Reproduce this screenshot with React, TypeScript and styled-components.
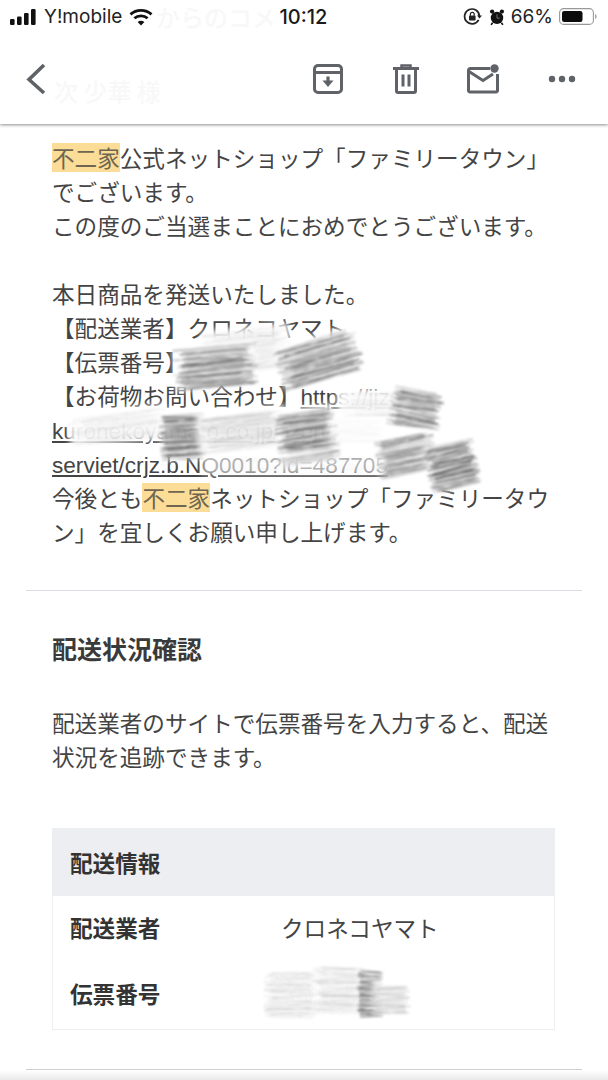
import styled, { createGlobalStyle } from 'styled-components';

const GlobalStyle = createGlobalStyle`
	html, body {
		margin: 0;
		padding: 0;
		background: #ffffff;
	}

	body {
		font-family: 'Noto Sans CJK JP', 'Noto Sans', sans-serif;
		color: #444444;
	}
`;

const Page = styled.div`
	position: relative;
	width: 608px;
	height: 1080px;
	overflow: hidden;
	background: #ffffff;
`;

const TopBar = styled.header`
	position: relative;
	height: 124px;
	background: #ffffff;
	box-shadow: 0 1px 3px rgba(0, 0, 0, 0.45);
	z-index: 2;
`;

const GhostText = styled.span<{ $left: number; $top: number }>`
	position: absolute;
	left: ${(props) => props.$left}px;
	top: ${(props) => props.$top}px;
	font-size: 24px;
	line-height: 30px;
	font-weight: 500;
	color: #f8f8f8;
	white-space: nowrap;
`;

const StatusBar = styled.div`
	position: relative;
	display: grid;
	grid-template-columns: 1fr auto 1fr;
	align-items: center;
	height: 33px;
	padding: 0 11px 0 10px;
	font-family: Inter, 'Liberation Sans', sans-serif;
	font-size: 19px;
	color: #222222;
`;

const StatusLeft = styled.div`
	display: flex;
	align-items: center;
	gap: 7px;
`;

const StatusRight = styled.div`
	display: flex;
	align-items: center;
	justify-content: flex-end;
	gap: 6px;
`;

const Time = styled.span`
	font-size: 20px;
	font-weight: 500;
	color: #1a1a1a;
`;

const ActionBar = styled.nav`
	position: relative;
	display: flex;
	align-items: center;
	justify-content: space-between;
	height: 91px;
	padding: 0 32px 0 26px;
`;

const Actions = styled.div`
	display: flex;
	align-items: center;
	gap: 48px;
`;

const Content = styled.main`
	padding: 17px 0 0;
`;

const Section = styled.section`
	padding: 0 52px;
`;

const Paragraph = styled.p`
	margin: 0;
	font-size: 22.6px;
	line-height: 34px;
	white-space: nowrap;
`;

const Mark = styled.span`
	display: inline-block;
	line-height: 29px;
	background: #fcdd98;
	color: #6e6650;
`;

const LinkText = styled.span`
	font-family: 'Liberation Sans', sans-serif;
	line-height: 1;
	color: #444444;
	text-decoration: underline;
	text-underline-offset: 2px;
`;

const Divider = styled.hr`
	height: 1px;
	margin: 41px 26px 0;
	border: 0;
	background: #d9dce6;
`;

const Heading = styled.h2`
	margin: 39px 0 40px;
	font-size: 25px;
	line-height: 36px;
	font-weight: 700;
	color: #3a3a3a;
`;

const InfoTable = styled.div`
	width: 503px;
	margin-top: 54px;
	padding-bottom: 1px;
	border: 1px solid #eceef2;
	box-sizing: border-box;
`;

const TableHead = styled.div`
	display: flex;
	align-items: center;
	height: 67px;
	padding: 0 17px;
	background: #eceef2;
	font-size: 22.6px;
	font-weight: 700;
	color: #333333;
`;

const TableRow = styled.div`
	display: grid;
	grid-template-columns: 211px 1fr;
	align-items: center;
	box-sizing: border-box;
	height: 66px;
	padding: 0 17px 3px;
	font-size: 22.6px;
`;

const RowLabel = styled.span`
	font-weight: 700;
	color: #333333;
`;

const RowValue = styled.span`
	color: #444444;
`;

const FootRule = styled.div`
	height: 1px;
	margin: 39px 26px 0;
	background: #cfcfcf;
`;

const FootShade = styled.div`
	height: 9px;
	margin-top: 1px;
	background: linear-gradient(#fdfdfd, #e9e9e9);
`;

const ScribbleLayer = styled.svg`
	position: absolute;
	top: 0;
	left: 0;
	z-index: 1;
	pointer-events: none;
`;

type Patch = {
	x: number;
	y: number;
	w: number;
	h: number;
	angle: number;
	ink: number;
};

const patches: Patch[] = [
	{ x: 206, y: 330, w: 82, h: 40, angle: -6, ink: 0.1 },
	{ x: 177, y: 347, w: 76, h: 38, angle: -5, ink: 0.55 },
	{ x: 280, y: 338, w: 78, h: 40, angle: -16, ink: 0.5 },
	{ x: 340, y: 392, w: 96, h: 24, angle: 0, ink: 0.06 },
	{ x: 394, y: 390, w: 44, h: 36, angle: 10, ink: 0.5 },
	{ x: 72, y: 412, w: 92, h: 28, angle: -6, ink: 0.07 },
	{ x: 164, y: 414, w: 38, h: 42, angle: -4, ink: 0.7 },
	{ x: 200, y: 412, w: 84, h: 36, angle: -6, ink: 0.16 },
	{ x: 280, y: 410, w: 54, h: 50, angle: -8, ink: 0.6 },
	{ x: 330, y: 418, w: 48, h: 24, angle: 0, ink: 0.03 },
	{ x: 205, y: 456, w: 175, h: 16, angle: 0, ink: 0.03 },
	{ x: 380, y: 436, w: 52, h: 36, angle: -12, ink: 0.5 },
	{ x: 430, y: 442, w: 44, h: 44, angle: -14, ink: 0.68 },
	{ x: 268, y: 970, w: 46, h: 46, angle: 0, ink: 0.12 },
	{ x: 318, y: 966, w: 42, h: 44, angle: 0, ink: 0.14 },
	{ x: 362, y: 970, w: 16, h: 44, angle: 0, ink: 0.65 },
	{ x: 376, y: 984, w: 30, h: 28, angle: 0, ink: 0.2 }
];

// small seeded generator so the hatching is the same on every render
const seeded = (start: number) => {
	let value = start;
	return () => {
		value = (value * 16807) % 2147483647;
		return value / 2147483647;
	};
};

const Hatch = ({ patch, seed }: { patch: Patch; seed: number }) => {
	const random = seeded(seed * 7919 + 13);
	const lines = [];
	for (let y = 0; y < patch.h; y += 0.8) {
		const inset = random() * patch.w * 0.22;
		const start = patch.x + inset - 5;
		const end = patch.x + patch.w - random() * patch.w * 0.22 + 5;
		const top = patch.y + y;
		lines.push(
			<line
				key={y}
				x1={start}
				y1={top + random() * 4}
				x2={end}
				y2={top + random() * 4}
				stroke="#444444"
				strokeWidth={0.8 + random() * 0.9}
				strokeOpacity={Math.min(1, patch.ink * (0.3 + random() * 0.6))}
			/>
		);
	}
	const cx = patch.x + patch.w / 2;
	const cy = patch.y + patch.h / 2;
	return (
		<g transform={`rotate(${patch.angle} ${cx} ${cy})`}>
			<rect
				x={patch.x - 3}
				y={patch.y - 3}
				width={patch.w + 6}
				height={patch.h + 6}
				fill="#ffffff"
				fillOpacity={patch.ink < 0.05 ? 0.6 : 0.94}
				filter="url(#soft)"
			/>
			<g filter="url(#pencil)">{lines}</g>
		</g>
	);
};

const Scribbles = () => (
	<ScribbleLayer width={608} height={1080} viewBox="0 0 608 1080">
		<defs>
			<filter id="soft" x="-20%" y="-20%" width="140%" height="140%">
				<feGaussianBlur stdDeviation="3" />
			</filter>
			<filter id="pencil" x="-10%" y="-10%" width="120%" height="120%">
				<feTurbulence type="fractalNoise" baseFrequency="0.08 1.3" numOctaves="2" seed="4" result="grain" />
				<feColorMatrix
					in="grain"
					type="matrix"
					values="0 0 0 0 0  0 0 0 0 0  0 0 0 0 0  2.4 0 0 0 -0.15"
					result="mask"
				/>
				<feComposite in="SourceGraphic" in2="mask" operator="in" />
				<feGaussianBlur stdDeviation="0.9" />
			</filter>
		</defs>
		{patches.map((patch, index) => (
			<Hatch key={index} patch={patch} seed={index + 1} />
		))}
	</ScribbleLayer>
);

const SignalIcon = () => (
	<svg width="27" height="16" viewBox="0 0 27 16" fill="#111111">
		<rect x="0" y="10" width="4.6" height="6" rx="1.2" />
		<rect x="7" y="7.5" width="4.6" height="8.5" rx="1.2" />
		<rect x="14" y="4" width="4.6" height="12" rx="1.2" />
		<rect x="21" y="0" width="4.6" height="16" rx="1.2" />
	</svg>
);

const WifiIcon = () => (
	<svg width="24" height="18" viewBox="0 0 24 18" fill="none" stroke="#111111" strokeWidth="2.8">
		<path d="M1.5 6.4C7.4 1 16.6 1 22.5 6.4" />
		<path d="M5.4 10.3c3.7-3.3 9.5-3.3 13.2 0" />
		<path d="M12 17.5l-3.4-3.6c2-1.7 4.8-1.7 6.8 0z" fill="#111111" stroke="none" />
	</svg>
);

const RotationLockIcon = () => (
	<svg width="20" height="18" viewBox="0 0 20 18" fill="none" stroke="#222222" strokeWidth="1.7">
		<path d="M15.6 11.8A7.4 7.4 0 1 1 16.4 8.4" />
		<path d="M14 7.4h5l-2.5 3z" fill="#222222" stroke="none" />
		<rect x="6" y="7.6" width="6.6" height="5" rx="0.8" fill="#222222" stroke="none" />
		<path d="M7.4 7.8V6.2a1.9 1.9 0 0 1 3.8 0v1.6" strokeWidth="1.2" />
	</svg>
);

const AlarmIcon = () => (
	<svg width="16" height="18" viewBox="0 0 18 19" fill="#111111">
		<circle cx="9" cy="10.5" r="7" />
		<circle cx="3.5" cy="3.4" r="2.4" />
		<circle cx="14.5" cy="3.4" r="2.4" />
		<path d="M4 16l-1.6 2.4M14 16l1.6 2.4" stroke="#111111" strokeWidth="1.8" />
		<path d="M9 6.4v4.4h3" stroke="#777777" strokeWidth="1.1" fill="none" />
	</svg>
);

const BatteryIcon = () => (
	<svg width="38" height="17" viewBox="0 0 38 17">
		<rect x="0.6" y="0.6" width="33.8" height="15.8" rx="4" fill="none" stroke="#999999" strokeWidth="1.1" />
		<rect x="3" y="3" width="20.5" height="11" rx="2.2" fill="#0c0c0c" />
		<path d="M36 6v5c1.1-.3 1.7-1.3 1.7-2.5S37.1 6.3 36 6z" fill="#aaaaaa" />
	</svg>
);

const BackIcon = () => (
	<svg width="20" height="32" viewBox="0 0 20 32" fill="none" stroke="#5f6368" strokeWidth="3.6">
		<path d="M18 2 3 16.5 18 30" />
	</svg>
);

const ArchiveIcon = () => (
	<svg width="32" height="30" viewBox="0 0 32 30" fill="none" stroke="#5f6368" strokeWidth="3">
		<rect x="1.5" y="1.5" width="27" height="27" rx="3.5" />
		<path d="M1.5 8.5h27" />
		<path d="M15 12.5v6" strokeWidth="3.2" />
		<path d="M9.5 16.5h11L15 23z" fill="#5f6368" stroke="none" />
	</svg>
);

const TrashIcon = () => (
	<svg width="26" height="30" viewBox="0 0 26 30" fill="none" stroke="#5f6368" strokeWidth="3">
		<path d="M0 4.5h26" />
		<path d="M8.5 4V1.5h9V4" strokeWidth="2.5" />
		<path d="M3.5 5v22a1.5 1.5 0 0 0 1.5 1.5h16a1.5 1.5 0 0 0 1.5-1.5V5" />
		<path d="M10 10.5v12M16 10.5v12" />
	</svg>
);

const MailIcon = () => (
	<svg width="33" height="30" viewBox="0 0 33 30" fill="none" stroke="#5f6368" strokeWidth="3">
		<path d="M23 4.5H3.5a2 2 0 0 0-2 2v20a1.5 1.5 0 0 0 1.5 1.5h26a1.5 1.5 0 0 0 1.5-1.5V10" />
		<path d="M2 7.5l14 9 10-6.5" />
		<circle cx="27.5" cy="4.5" r="4.2" fill="#5f6368" stroke="none" />
	</svg>
);

const MoreIcon = () => (
	<svg width="28" height="8" viewBox="0 0 28 8" fill="#5f6368">
		<circle cx="4" cy="4" r="3.2" />
		<circle cx="14" cy="4" r="3.2" />
		<circle cx="24" cy="4" r="3.2" />
	</svg>
);

const App = () => {
	return (
		<Page>
			<GlobalStyle />
			<TopBar>
				<GhostText $left={156} $top={2}>
					からのコメ
				</GhostText>
				<GhostText $left={54} $top={76}>
					次 少華 様
				</GhostText>
				<StatusBar>
					<StatusLeft>
						<SignalIcon />
						<span>Y!mobile</span>
						<WifiIcon />
					</StatusLeft>
					<Time>10:12</Time>
					<StatusRight>
						<RotationLockIcon />
						<AlarmIcon />
						<span>66%</span>
						<BatteryIcon />
					</StatusRight>
				</StatusBar>
				<ActionBar>
					<BackIcon />
					<Actions>
						<ArchiveIcon />
						<TrashIcon />
						<MailIcon />
						<MoreIcon />
					</Actions>
				</ActionBar>
			</TopBar>
			<Content>
				<Section>
					<Paragraph>
						<Mark>不二家</Mark>公式ネットショップ「ファミリータウン」
						<br />
						でございます。
						<br />
						この度のご当選まことにおめでとうございます。
						<br />
						<br />
						本日商品を発送いたしました。
						<br />
						【配送業者】クロネコヤマト
						<br />
						【伝票番号】
						<br />
						【お荷物お問い合わせ】<LinkText>https://jizen.</LinkText>
						<br />
						<LinkText>kuronekoyamato.co.jp/jizen/</LinkText>
						<br />
						<LinkText>serviet/crjz.b.NQ0010?id=487705</LinkText>
						<br />
						今後とも<Mark>不二家</Mark>ネットショップ「ファミリータウ
						<br />
						ン」を宜しくお願い申し上げます。
					</Paragraph>
				</Section>
				<Divider />
				<Section>
					<Heading>配送状況確認</Heading>
					<Paragraph>
						配送業者のサイトで伝票番号を入力すると、配送
						<br />
						状況を追跡できます。
					</Paragraph>
					<InfoTable>
						<TableHead>配送情報</TableHead>
						<TableRow>
							<RowLabel>配送業者</RowLabel>
							<RowValue>クロネコヤマト</RowValue>
						</TableRow>
						<TableRow>
							<RowLabel>伝票番号</RowLabel>
							<RowValue />
						</TableRow>
					</InfoTable>
				</Section>
				<FootRule />
				<FootShade />
			</Content>
			<Scribbles />
		</Page>
	);
};

export default App;
